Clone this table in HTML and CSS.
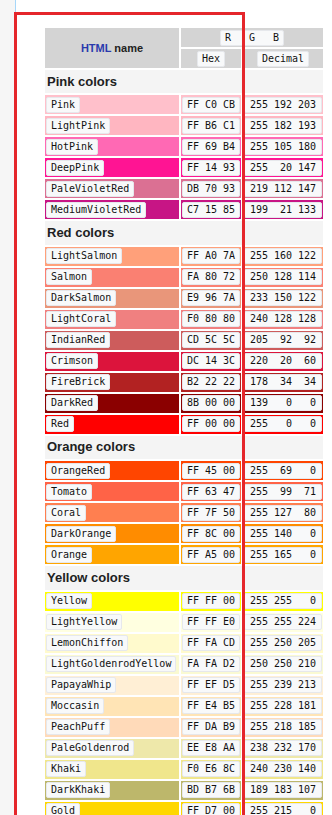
FILE: index.html
```html
<!DOCTYPE html>
<html lang="en">
<head>
<meta charset="utf-8">
<title>Web colors</title>
<link rel="stylesheet" href="styles.css">
</head>
<body>
<div class="page">
  <div class="sidebar"></div>
  <main class="content">
    <table class="colors">
      <colgroup><col class="c-name"><col class="c-hex"><col class="c-dec"></colgroup>
      <thead>
        <tr class="hrow">
          <th rowspan="2" class="hname"><a href="#">HTML</a> name</th>
          <th colspan="2"><code>R   G   B</code></th>
        </tr>
        <tr class="hrow">
          <th><code>Hex</code></th>
          <th><code>Decimal</code></th>
        </tr>
      </thead>
      <tbody>
        <tr class="group"><th colspan="3">Pink colors</th></tr>
        <tr class="row" style="--c:#FFC0CB"><td class="name"><code>Pink</code></td><td class="hex"><code>FF C0 CB</code></td><td class="dec"><code>255 192 203</code></td></tr>
        <tr class="row" style="--c:#FFB6C1"><td class="name"><code>LightPink</code></td><td class="hex"><code>FF B6 C1</code></td><td class="dec"><code>255 182 193</code></td></tr>
        <tr class="row" style="--c:#FF69B4"><td class="name"><code>HotPink</code></td><td class="hex"><code>FF 69 B4</code></td><td class="dec"><code>255 105 180</code></td></tr>
        <tr class="row" style="--c:#FF1493"><td class="name"><code>DeepPink</code></td><td class="hex"><code>FF 14 93</code></td><td class="dec"><code>255  20 147</code></td></tr>
        <tr class="row" style="--c:#DB7093"><td class="name"><code>PaleVioletRed</code></td><td class="hex"><code>DB 70 93</code></td><td class="dec"><code>219 112 147</code></td></tr>
        <tr class="row" style="--c:#C71585"><td class="name"><code>MediumVioletRed</code></td><td class="hex"><code>C7 15 85</code></td><td class="dec"><code>199  21 133</code></td></tr>

        <tr class="group"><th colspan="3">Red colors</th></tr>
        <tr class="row" style="--c:#FFA07A"><td class="name"><code>LightSalmon</code></td><td class="hex"><code>FF A0 7A</code></td><td class="dec"><code>255 160 122</code></td></tr>
        <tr class="row" style="--c:#FA8072"><td class="name"><code>Salmon</code></td><td class="hex"><code>FA 80 72</code></td><td class="dec"><code>250 128 114</code></td></tr>
        <tr class="row" style="--c:#E9967A"><td class="name"><code>DarkSalmon</code></td><td class="hex"><code>E9 96 7A</code></td><td class="dec"><code>233 150 122</code></td></tr>
        <tr class="row" style="--c:#F08080"><td class="name"><code>LightCoral</code></td><td class="hex"><code>F0 80 80</code></td><td class="dec"><code>240 128 128</code></td></tr>
        <tr class="row" style="--c:#CD5C5C"><td class="name"><code>IndianRed</code></td><td class="hex"><code>CD 5C 5C</code></td><td class="dec"><code>205  92  92</code></td></tr>
        <tr class="row" style="--c:#DC143C"><td class="name"><code>Crimson</code></td><td class="hex"><code>DC 14 3C</code></td><td class="dec"><code>220  20  60</code></td></tr>
        <tr class="row" style="--c:#B22222"><td class="name"><code>FireBrick</code></td><td class="hex"><code>B2 22 22</code></td><td class="dec"><code>178  34  34</code></td></tr>
        <tr class="row" style="--c:#8B0000"><td class="name"><code>DarkRed</code></td><td class="hex"><code>8B 00 00</code></td><td class="dec"><code>139   0   0</code></td></tr>
        <tr class="row" style="--c:#FF0000"><td class="name"><code>Red</code></td><td class="hex"><code>FF 00 00</code></td><td class="dec"><code>255   0   0</code></td></tr>

        <tr class="group"><th colspan="3">Orange colors</th></tr>
        <tr class="row" style="--c:#FF4500"><td class="name"><code>OrangeRed</code></td><td class="hex"><code>FF 45 00</code></td><td class="dec"><code>255  69   0</code></td></tr>
        <tr class="row" style="--c:#FF6347"><td class="name"><code>Tomato</code></td><td class="hex"><code>FF 63 47</code></td><td class="dec"><code>255  99  71</code></td></tr>
        <tr class="row" style="--c:#FF7F50"><td class="name"><code>Coral</code></td><td class="hex"><code>FF 7F 50</code></td><td class="dec"><code>255 127  80</code></td></tr>
        <tr class="row" style="--c:#FF8C00"><td class="name"><code>DarkOrange</code></td><td class="hex"><code>FF 8C 00</code></td><td class="dec"><code>255 140   0</code></td></tr>
        <tr class="row" style="--c:#FFA500"><td class="name"><code>Orange</code></td><td class="hex"><code>FF A5 00</code></td><td class="dec"><code>255 165   0</code></td></tr>

        <tr class="group"><th colspan="3">Yellow colors</th></tr>
        <tr class="row" style="--c:#FFFF00"><td class="name"><code>Yellow</code></td><td class="hex"><code>FF FF 00</code></td><td class="dec"><code>255 255   0</code></td></tr>
        <tr class="row" style="--c:#FFFFE0"><td class="name"><code>LightYellow</code></td><td class="hex"><code>FF FF E0</code></td><td class="dec"><code>255 255 224</code></td></tr>
        <tr class="row" style="--c:#FFFACD"><td class="name"><code>LemonChiffon</code></td><td class="hex"><code>FF FA CD</code></td><td class="dec"><code>255 250 205</code></td></tr>
        <tr class="row" style="--c:#FAFAD2"><td class="name"><code>LightGoldenrodYellow</code></td><td class="hex"><code>FA FA D2</code></td><td class="dec"><code>250 250 210</code></td></tr>
        <tr class="row" style="--c:#FFEFD5"><td class="name"><code>PapayaWhip</code></td><td class="hex"><code>FF EF D5</code></td><td class="dec"><code>255 239 213</code></td></tr>
        <tr class="row" style="--c:#FFE4B5"><td class="name"><code>Moccasin</code></td><td class="hex"><code>FF E4 B5</code></td><td class="dec"><code>255 228 181</code></td></tr>
        <tr class="row" style="--c:#FFDAB9"><td class="name"><code>PeachPuff</code></td><td class="hex"><code>FF DA B9</code></td><td class="dec"><code>255 218 185</code></td></tr>
        <tr class="row" style="--c:#EEE8AA"><td class="name"><code>PaleGoldenrod</code></td><td class="hex"><code>EE E8 AA</code></td><td class="dec"><code>238 232 170</code></td></tr>
        <tr class="row" style="--c:#F0E68C"><td class="name"><code>Khaki</code></td><td class="hex"><code>F0 E6 8C</code></td><td class="dec"><code>240 230 140</code></td></tr>
        <tr class="row" style="--c:#BDB76B"><td class="name"><code>DarkKhaki</code></td><td class="hex"><code>BD B7 6B</code></td><td class="dec"><code>189 183 107</code></td></tr>
        <tr class="row" style="--c:#FFD700"><td class="name"><code>Gold</code></td><td class="hex"><code>FF D7 00</code></td><td class="dec"><code>255 215   0</code></td></tr>
      </tbody>
    </table>
  </main>
  <div class="highlight"></div>
</div>
</body>
</html>
```

FILE: styles.css
```css
html, body {
  margin: 0;
  padding: 0;
  background: #ffffff;
}

body {
  font-family: "Liberation Sans", Arial, sans-serif;
  color: #202122;
}

.page {
  position: relative;
  display: flex;
  height: 815px;
  overflow: hidden;
}

.sidebar {
  width: 15px;
  flex: 0 0 15px;
  background: #f6f6f6;
}

.content {
  flex: 1;
  border-left: 1px solid #a7d7f9;
  background: #ffffff;
  padding: 26px 0 0 27px;
}

.highlight {
  position: absolute;
  left: 14px;
  top: 12px;
  width: 225px;
  height: 900px;
  border: 3px solid #e5262b;
  pointer-events: none;
}

.colors {
  border-collapse: separate;
  border-spacing: 2px;
  table-layout: fixed;
  width: 282px;
}

.c-name { width: 134px; }
.c-hex { width: 60px; }
.c-dec { width: 80px; }

.colors code {
  font-family: "DejaVu Sans Mono", monospace;
  font-size: 10px;
  line-height: 12px;
  font-weight: normal;
  color: #111111;
  background: #f8f9fa;
  border: 1px solid #e6e8ec;
  border-radius: 2px;
  padding: 1px 4px;
  white-space: pre;
  display: inline-block;
  vertical-align: top;
}

.hrow th {
  background: #d4d4d4;
  height: 19px;
  padding: 0;
  text-align: center;
  vertical-align: middle;
  font-size: 10px;
  line-height: 12px;
}

.hrow th.hname {
  font-size: 11px;
  font-weight: bold;
  color: #222222;
}

.hname a {
  color: #2a3aad;
  text-decoration: none;
}

.group th {
  background: #f4f4f4;
  height: 23.4px;
  padding: 0 2px;
  text-align: left;
  font-size: 13px;
  line-height: 16px;
  font-weight: bold;
  vertical-align: middle;
}

.row {
  height: 19px;
}

.row td {
  background: var(--c);
  padding: 1px;
  vertical-align: middle;
  font-size: 10px;
  line-height: 12px;
}

.row .name {
  text-align: left;
}

.row .hex,
.row .dec {
  text-align: center;
}

.row .hex code,
.row .dec code {
  display: block;
  padding: 1px 0;
}
```
